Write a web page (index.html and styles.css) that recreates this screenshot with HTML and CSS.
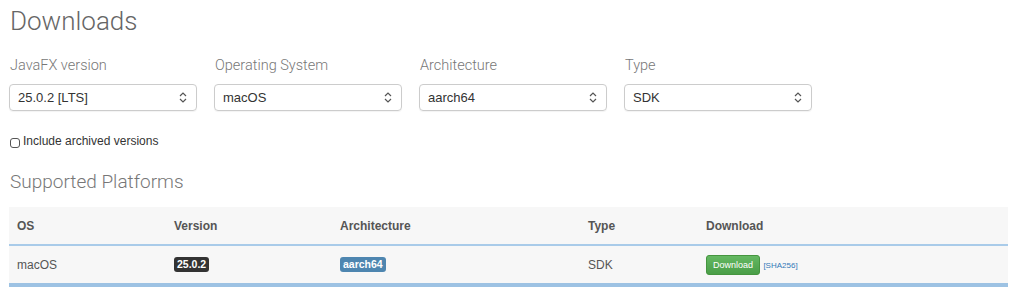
FILE: index.html
```html
<!DOCTYPE html>
<html lang="en">
<head>
    <meta charset="UTF-8">
    <title>Downloads</title>
    <link rel="stylesheet" href="styles.css">
</head>
<body>
    <div class="container">
        <h1>Downloads</h1>

        <div class="filters">
            <div class="filter">
                <label>JavaFX version</label>
                <div class="select"><span>25.0.2 [LTS]</span><svg width="8" height="11" viewBox="0 0 8 11"><path d="M1 4 L4 1 L7 4 M1 7 L4 10 L7 7" fill="none" stroke="#555" stroke-width="1.2"/></svg></div>
            </div>
            <div class="filter">
                <label>Operating System</label>
                <div class="select"><span>macOS</span><svg width="8" height="11" viewBox="0 0 8 11"><path d="M1 4 L4 1 L7 4 M1 7 L4 10 L7 7" fill="none" stroke="#555" stroke-width="1.2"/></svg></div>
            </div>
            <div class="filter">
                <label>Architecture</label>
                <div class="select"><span>aarch64</span><svg width="8" height="11" viewBox="0 0 8 11"><path d="M1 4 L4 1 L7 4 M1 7 L4 10 L7 7" fill="none" stroke="#555" stroke-width="1.2"/></svg></div>
            </div>
            <div class="filter">
                <label>Type</label>
                <div class="select"><span>SDK</span><svg width="8" height="11" viewBox="0 0 8 11"><path d="M1 4 L4 1 L7 4 M1 7 L4 10 L7 7" fill="none" stroke="#555" stroke-width="1.2"/></svg></div>
            </div>
        </div>

        <div class="archived">
            <span class="checkbox"></span>
            <span>Include archived versions</span>
        </div>

        <h2>Supported Platforms</h2>

        <table class="platforms">
            <colgroup>
                <col style="width: 157px">
                <col style="width: 166px">
                <col style="width: 248px">
                <col style="width: 118px">
                <col>
            </colgroup>
            <thead>
                <tr>
                    <th>OS</th>
                    <th>Version</th>
                    <th>Architecture</th>
                    <th>Type</th>
                    <th>Download</th>
                </tr>
            </thead>
            <tbody>
                <tr>
                    <td>macOS</td>
                    <td><span class="badge badge-dark">25.0.2</span></td>
                    <td><span class="badge badge-blue">aarch64</span></td>
                    <td>SDK</td>
                    <td><span class="btn-download">Download</span> <a class="sha" href="#">[SHA256]</a></td>
                </tr>
            </tbody>
        </table>
    </div>
</body>
</html>
```

FILE: styles.css
```css
body {
    margin: 0;
    font-family: 'Liberation Sans', Arial, sans-serif;
    color: #555;
    background: white;
}

.container {
    padding: 0 16px 0 9px;
}

h1 {
    margin: 0;
    padding-top: 4px;
    font-family: Roboto, 'Liberation Sans', sans-serif;
    font-weight: 300;
    font-size: 26px;
    line-height: 34px;
    color: #666;
    padding-left: 1px;
}

.filters {
    display: flex;
    gap: 17px;
    margin-top: 18px;
}

.filter {
    width: 188px;
}

.filter label {
    display: block;
    font-family: Roboto, 'Liberation Sans', sans-serif;
    font-weight: 300;
    font-size: 14.5px;
    line-height: 20px;
    color: #777;
    padding-left: 1px;
    margin-bottom: 8px;
}

.select {
    display: flex;
    align-items: center;
    justify-content: space-between;
    height: 25px;
    padding: 0 9px 0 8px;
    border: 1px solid #ccc;
    border-radius: 4px;
    box-shadow: 0 1px 1px rgba(0,0,0,0.05);
    font-size: 13px;
    color: #333;
}

.archived {
    display: flex;
    align-items: center;
    gap: 3px;
    margin-top: 23px;
    font-size: 12px;
    color: #333;
    padding-left: 1px;
}

.checkbox {
    width: 8px;
    height: 8px;
    margin-top: 3px;
    border: 1px solid #555;
    border-radius: 3px;
}

h2 {
    margin: 22px 0 0;
    font-family: Roboto, 'Liberation Sans', sans-serif;
    font-weight: 300;
    font-size: 19px;
    line-height: 24px;
    color: #777;
    padding-left: 1px;
}

.platforms {
    width: 999px;
    margin-top: 13px;
    border-collapse: collapse;
    table-layout: fixed;
    font-size: 12px;
    background: #f7f7f7;
    border-bottom: 4px solid #9dc2e3;
}

.platforms th {
    height: 37px;
    padding: 0 8px;
    text-align: left;
    font-weight: bold;
    color: #555;
    border-bottom: 2px solid #a9cbe9;
}

.platforms td {
    height: 37px;
    padding: 0 8px;
    color: #555;
}

.badge {
    display: inline-block;
    padding: 1px 3px;
    border-radius: 3px;
    font-size: 10.5px;
    font-weight: bold;
    line-height: 13px;
    color: white;
}

.badge-dark {
    background: #333;
}

.badge-blue {
    background: #4e86b0;
}

.btn-download {
    display: inline-block;
    padding: 0 6px;
    height: 18px;
    line-height: 18px;
    border-radius: 3px;
    font-size: 9px;
    color: white;
    background: linear-gradient(#64b862, #4a9e48);
    border: 1px solid #45953f;
}

.sha {
    font-size: 8px;
    color: #337ab7;
    text-decoration: none;
}
```
